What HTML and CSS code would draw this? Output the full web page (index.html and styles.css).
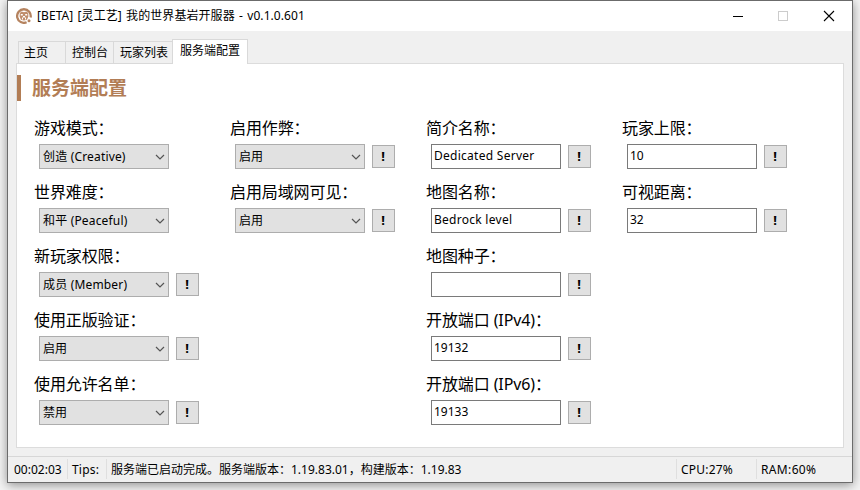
FILE: index.html
```html
<!DOCTYPE html>
<html lang="zh-CN">
<head>
<meta charset="utf-8">
<title>我的世界基岩开服器</title>
<link rel="stylesheet" href="styles.css">
</head>
<body>
<svg class="defs" width="0" height="0"><symbol id="chevron" viewBox="0 0 10 6"><path d="M1 1 L5 5 L9 1" fill="none" stroke="#555" stroke-width="1.2"/></symbol></svg>
<div class="window">
  <header class="titlebar">
    <svg class="logo" viewBox="0 0 16 16"><path d="M10.6 14.3 A6.800 6.800 0 1 1 14.6 9.4" fill="none" stroke="#b5835f" stroke-width="2.300"/><path d="M3.800 5 L5.500 3.500 L8 4.300 L10.500 3.500 L12.200 5 L12.400 8.500 L11 11.800 L8 12.500 L5 11.800 L3.600 8.500Z" fill="#c08e6c"/><path d="M4.800 6h2v1.600h-2zM9.200 6h2v1.600h-2zM7 8h2v1.600H7zM6 9.600h1v2H6zM9 9.600h1v2H9z" fill="#fff"/><circle cx="13" cy="12.700" r="1.500" fill="#b5835f"/></svg>
    <span class="caption">[BETA] [灵工艺] 我的世界基岩开服器 - v0.1.0.601</span>
    <svg class="controls" viewBox="0 0 110 12"><path d="M4 6.500h10" stroke="#000"/><rect x="49.500" y="1.500" width="9" height="9" fill="none" stroke="#ccc"/><path d="M95 1 L105 11 M105 1 L95 11" stroke="#000" stroke-width="1.1"/></svg>
  </header>
  <nav class="tabs">
    <div class="tab home">主页</div><div class="tab console">控制台</div><div class="tab players">玩家列表</div><div class="tab active">服务端配置</div>
  </nav>
  <main class="panel">
    <h1>服务端配置</h1>
    <div class="columns">
      <section>
        <div class="field"><label>游戏模式：</label><div class="row"><div class="select"><span class="latin">创造 (Creative)</span><svg><use href="#chevron"/></svg></div></div></div>
        <div class="field"><label>世界难度：</label><div class="row"><div class="select"><span class="latin">和平 (Peaceful)</span><svg><use href="#chevron"/></svg></div></div></div>
        <div class="field"><label>新玩家权限：</label><div class="row"><div class="select"><span class="latin">成员 (Member)</span><svg><use href="#chevron"/></svg></div><button>!</button></div></div>
        <div class="field"><label>使用正版验证：</label><div class="row"><div class="select"><span>启用</span><svg><use href="#chevron"/></svg></div><button>!</button></div></div>
        <div class="field"><label>使用允许名单：</label><div class="row"><div class="select"><span>禁用</span><svg><use href="#chevron"/></svg></div><button>!</button></div></div>
      </section>
      <section>
        <div class="field"><label>启用作弊：</label><div class="row"><div class="select"><span>启用</span><svg><use href="#chevron"/></svg></div><button>!</button></div></div>
        <div class="field"><label>启用局域网可见：</label><div class="row"><div class="select"><span>启用</span><svg><use href="#chevron"/></svg></div><button>!</button></div></div>
      </section>
      <section>
        <div class="field"><label>简介名称：</label><div class="row"><div class="input wide">Dedicated Server</div><button>!</button></div></div>
        <div class="field"><label>地图名称：</label><div class="row"><div class="input wide">Bedrock level</div><button>!</button></div></div>
        <div class="field"><label>地图种子：</label><div class="row"><div class="input"></div><button>!</button></div></div>
        <div class="field"><label>开放端口 (IPv4)：</label><div class="row"><div class="input">19132</div><button>!</button></div></div>
        <div class="field"><label>开放端口 (IPv6)：</label><div class="row"><div class="input">19133</div><button>!</button></div></div>
      </section>
      <section>
        <div class="field"><label>玩家上限：</label><div class="row"><div class="input">10</div><button>!</button></div></div>
        <div class="field"><label>可视距离：</label><div class="row"><div class="input">32</div><button>!</button></div></div>
      </section>
    </div>
  </main>
  <footer class="status">
    <div class="time">00:02:03</div><div class="tips">Tips:</div><div class="message">服务端已启动完成。服务端版本：1.19.83.01，构建版本：1.19.83</div><div class="cpu">CPU:27%</div><div class="ram">RAM:60%</div>
  </footer>
</div>
</body>
</html>
```
FILE: styles.css
```css
* { box-sizing: border-box; }
body {
  margin: 0;
  width: 860px;
  height: 490px;
  overflow: hidden;
  background: #f4f4f4;
  padding-left: 7px;
  color: #000;
  font: 12px/16px "Noto Sans", "Noto Sans CJK SC", sans-serif;
}
.defs { display: block; }
.window {
  width: 846px;
  height: 483px;
  border: 1px solid #6b6b6b;
  background: #f0f0f0;
  box-shadow: 0 2px 10px rgba(0, 0, 0, .42);
  display: flex;
  flex-direction: column;
}
.titlebar {
  height: 30px;
  flex: none;
  background: #fff;
  display: flex;
  align-items: center;
  padding: 0 13px 0 8px;
}
.logo { width: 16px; height: 16px; margin-top: -1px; }
.caption { margin-left: 5px; flex: 1; white-space: nowrap; letter-spacing: .07px; word-spacing: 1.1px; }
.controls { width: 110px; height: 12px; }
.tabs {
  height: 33px;
  flex: none;
  padding-left: 10px;
  display: flex;
  align-items: flex-end;
  margin-bottom: -1px;
  z-index: 1;
}
.tab {
  height: 23px;
  border: 1px solid #d9d9d9;
  border-right: 0;
  padding: 3px 0 0 5px;
  white-space: nowrap;
}
.home { width: 47px; }
.console { width: 48px; padding-left: 6px; }
.players { width: 59px; padding-left: 6px; }
.active {
  width: 76px;
  height: 25px;
  padding-left: 7px;
  background: #fff;
  border-right: 1px solid #d9d9d9;
  border-bottom: 0;
}
.panel {
  width: 828px;
  height: 385px;
  flex: none;
  margin-left: 8px;
  border: 1px solid #dcdcdc;
  background: #fff;
  padding-top: 11px;
}
h1 {
  margin: 0;
  height: 26px;
  border-left: 4px solid #b27d55;
  padding-left: 11px;
  color: #b27d55;
  font-size: 19px;
  line-height: 26px;
  font-weight: 700;
}
.columns {
  display: grid;
  grid-template-columns: repeat(4, 196px);
  margin: 16px 0 0 17px;
}
.field { height: 64px; }
label {
  display: block;
  height: 27px;
  line-height: 22px;
  font-size: 16px;
  letter-spacing: -.1px;
  white-space: nowrap;
}
.row { display: flex; align-items: center; gap: 7px; padding-left: 5px; }
.select, .input { width: 130px; height: 25px; padding-left: 3px; white-space: nowrap; }
.select {
  background: #e1e1e1;
  border: 1px solid #adadad;
  display: flex;
  align-items: center;
  justify-content: space-between;
  padding-right: 3px;
}
.select svg { width: 10px; height: 6px; }
.latin { letter-spacing: .17px; }
.input { background: #fff; border: 1px solid #7a7a7a; line-height: 21px; padding-left: 2px; }
.wide { letter-spacing: .27px; }
button {
  width: 23px;
  height: 23px;
  padding: 0 1px 0 0;
  border: 1px solid #adadad;
  background: #e1e1e1;
  color: #000;
  font: 700 13px/19px "Noto Sans", sans-serif;
}
.status {
  height: 26px;
  margin-top: 8px;
  border-top: 1px solid #d7d7d7;
  display: flex;
  padding: 2px 0 0;
  line-height: 21px;
  white-space: nowrap;
}
.status div { height: 20px; border-left: 1px solid #dfdfdf; padding-left: 4px; }
.status .time { width: 59px; border-left: 0; padding-left: 6px; }
.tips { width: 39px; letter-spacing: .2px; }
.message { width: 570px; }
.cpu { width: 80px; letter-spacing: .2px; }
.ram { flex: 1; letter-spacing: .35px; }
```
